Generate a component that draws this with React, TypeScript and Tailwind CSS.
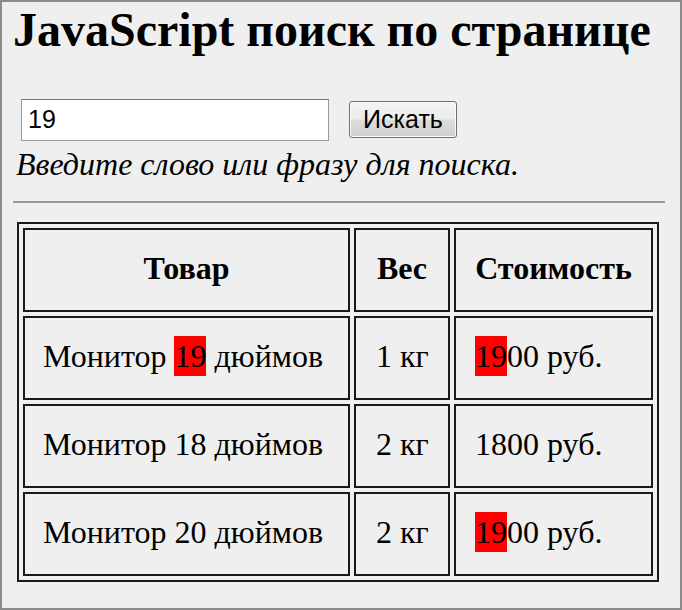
import React from 'react';

const serif = { fontFamily: '"Liberation Serif", "Times New Roman", serif' };

const rows = [
  { name: ['Монитор ', '19', ' дюймов'], weight: '1 кг', price: ['19', '00 руб.'] },
  { name: ['Монитор 18 дюймов', '', ''], weight: '2 кг', price: ['', '1800 руб.'] },
  { name: ['Монитор 20 дюймов', '', ''], weight: '2 кг', price: ['19', '00 руб.'] }
];

function Mark({ children }: { children: React.ReactNode }) {
  if (!children) return null;
  return <span className="bg-[#ff0000] py-[2px]">{children}</span>;
}

export default function App() {
  return (
    <div
      className="w-[682px] h-[610px] overflow-hidden border-2 border-[#8c8c8c] bg-[#efefef] text-black"
      style={serif}
    >
      <h1 className="mt-[4px] h-[48px] pl-[11px] text-[48px] font-bold leading-[48px] whitespace-nowrap">
        JavaScript поиск по странице
      </h1>

      <div className="mt-[45px] ml-[19px] flex items-start gap-[20px]">
        <div className="flex h-[42px] w-[308px] items-center border border-[#9a9a9a] border-t-[#7a7a7a] bg-white pl-[6px] font-['Liberation_Sans',Arial,sans-serif] text-[25px]">
          19
        </div>
        <button className="mt-[2px] flex h-[37px] w-[108px] items-center justify-center rounded-[3px] border border-[#707070] bg-[linear-gradient(#f4f4f4_0%,#ececec_48%,#dcdcdc_52%,#cfcfcf_100%)] font-['Liberation_Sans',Arial,sans-serif] text-[25px] shadow-[inset_0_0_0_1px_#fbfbfb]">
          Искать
        </button>
      </div>

      <p className="mt-[8px] h-[30px] pl-[14px] text-[32px] italic leading-[30px] whitespace-nowrap">
        Введите слово или фразу для поиска.
      </p>

      <div className="mt-[22px] ml-[11px] h-[2px] w-[652px] bg-[#9a9a9a]" />

      <table className="mt-[19px] ml-[15px] w-[642px] border-separate border-spacing-[4px] border-2 border-[#1a1a1a] text-[32px]">
        <thead>
          <tr className="h-[84px]">
            <th className="w-[327px] border-2 border-[#1a1a1a] font-bold pb-[4px]">Товар</th>
            <th className="w-[96px] border-2 border-[#1a1a1a] font-bold pb-[4px]">Вес</th>
            <th className="w-[199px] border-2 border-[#1a1a1a] font-bold pb-[4px]">Стоимость</th>
          </tr>
        </thead>
        <tbody>
          {rows.map((r, i) => (
            <tr key={i} className="h-[84px]">
              <td className="border-2 border-[#1a1a1a] pl-[18px] pb-[4px] whitespace-nowrap">
                {r.name[0]}
                <Mark>{r.name[1]}</Mark>
                {r.name[2]}
              </td>
              <td className="border-2 border-[#1a1a1a] pl-[20px] pb-[4px] whitespace-nowrap">{r.weight}</td>
              <td className="border-2 border-[#1a1a1a] pl-[19px] pb-[4px] whitespace-nowrap">
                <Mark>{r.price[0]}</Mark>
                {r.price[1]}
              </td>
            </tr>
          ))}
        </tbody>
      </table>
    </div>
  );
}
